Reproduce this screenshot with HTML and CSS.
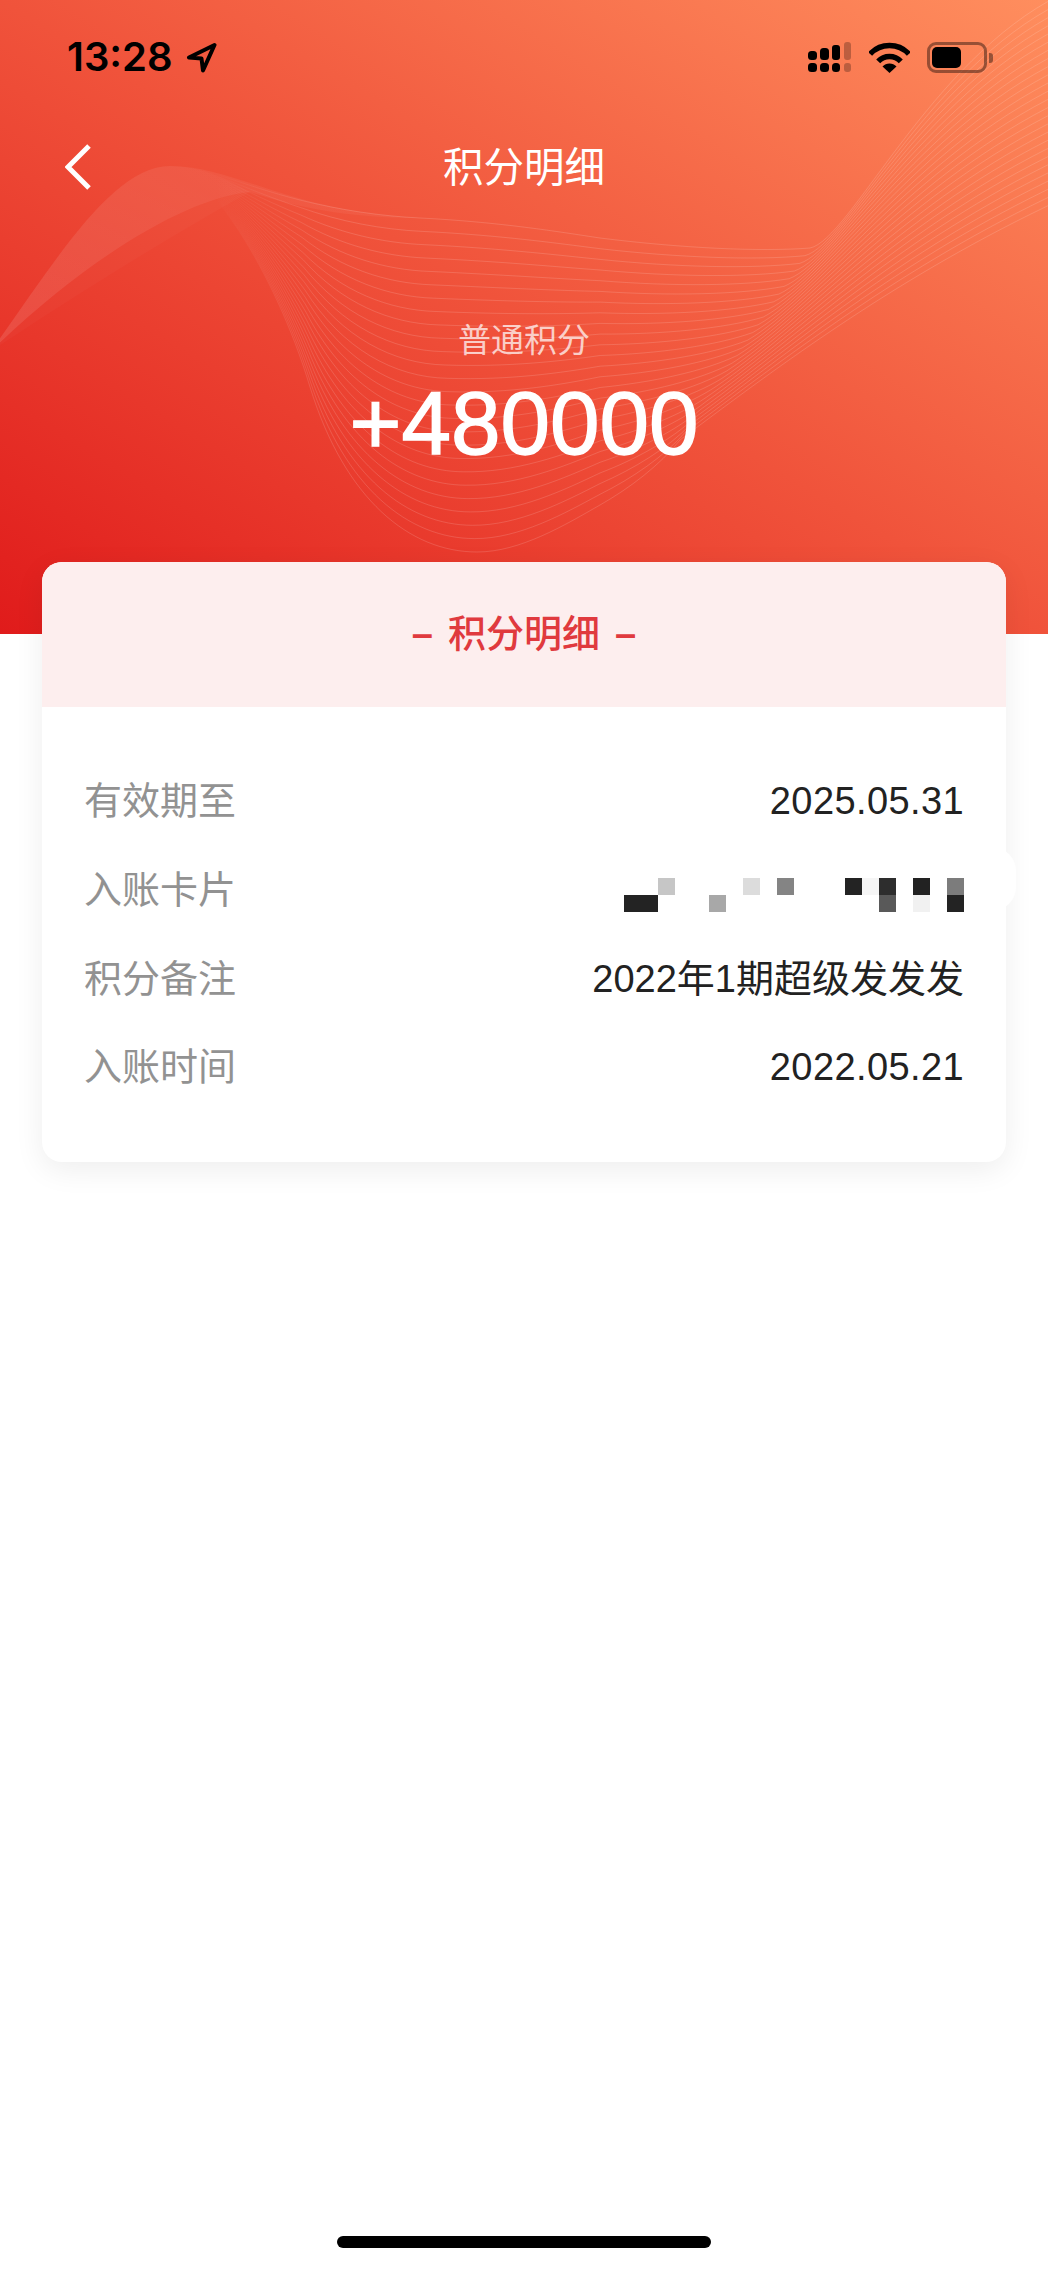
FILE: index.html
```html
<!DOCTYPE html>
<html lang="zh-CN">

<head>
    <meta charset="UTF-8">
    <meta name="viewport" content="width=device-width, initial-scale=1.0">
    <title>积分明细</title>
    <link rel="stylesheet" href="styles.css">
</head>

<body>
    <header class="top">
        <svg class="waves" viewBox="0 0 1048 634" aria-hidden="true">
            <defs>
                <linearGradient id="glow" x1="0" y1="1" x2="1" y2="0">
                    <stop offset="0" stop-color="#fff" stop-opacity=".1"></stop>
                    <stop offset="1" stop-color="#fff" stop-opacity=".03"></stop>
                </linearGradient>
                <linearGradient id="fade" gradientUnits="userSpaceOnUse" x1="215" y1="0" x2="330" y2="0">
                    <stop offset="0" stop-color="#fff" stop-opacity="0"></stop>
                    <stop offset="1" stop-color="#fff" stop-opacity=".14"></stop>
                </linearGradient>
            </defs>
            <path fill="url(#glow)" d="M-10 352C50 270 110 166 170 166C235 166 290 212 420 218C340 218 290 205 250 192C190 197 90 255 -10 352Z"></path>
            <path class="wave-soft" d="M-10 352C50 270 110 166 170 166C200 166 225 178 250 192C190 225 90 285 -10 352Z"></path>
            <g class="wave-lines"></g>
        </svg>

        <div class="status">
            <div class="status-left">
                <span class="time">13:28</span>
                <svg class="arrow" width="31" height="31" viewBox="0 0 31 31">
                    <path d="M28.5 3L3 15.5L15.5 16.5L17 28.5Z"></path>
                </svg>
            </div>
            <div class="status-right">
                <svg class="signal" width="43" height="30" viewBox="0 0 43 30">
                    <rect x="0" y="9" width="9" height="9" rx="3.5"></rect>
                    <rect x="12" y="6" width="9" height="12" rx="3.5"></rect>
                    <rect x="24" y="3" width="8" height="15" rx="3"></rect>
                    <rect class="off" x="36" y="0" width="7" height="18" rx="3"></rect>
                    <rect x="0" y="21" width="9" height="9" rx="3.5"></rect>
                    <rect x="12" y="21" width="9" height="9" rx="3.5"></rect>
                    <rect x="24" y="21" width="8" height="9" rx="3.5"></rect>
                    <rect class="off" x="36" y="21" width="7" height="9" rx="3"></rect>
                </svg>
                <svg class="wifi" width="41" height="31" viewBox="0 0 41 31">
                    <path class="wifi-arc" d="M1.1 12A26.5 26.5 0 0 1 39.9 12"></path>
                    <path class="wifi-arc" d="M9.2 19.4A15.5 15.5 0 0 1 31.8 19.4"></path>
                    <path d="M20.5 31L13.5 24.5A9.5 9.5 0 0 1 27.5 24.5Z"></path>
                </svg>
                <div class="battery"><div class="battery-level"></div></div>
            </div>
        </div>

        <nav class="nav">
            <svg class="back" width="27" height="48" viewBox="0 0 27 48">
                <path d="M24 3L3 24L24 45"></path>
            </svg>
            <h1>积分明细</h1>
        </nav>

        <div class="summary">
            <p class="summary-label">普通积分</p>
            <p class="summary-amount">+480000</p>
        </div>
    </header>

    <main class="card">
        <h2 class="card-title"><span class="dash">–</span><span>积分明细</span><span class="dash">–</span></h2>
        <div class="rows">
            <div class="row">
                <span class="row-label">有效期至</span>
                <span class="row-value row-date">2025.05.31</span>
            </div>
            <div class="row">
                <span class="row-label">入账卡片</span>
                <svg class="mosaic" width="340" height="34" viewBox="0 0 340 34">
                    <rect x="34" y="0" width="17" height="17" fill="#c6c6c6"></rect>
                    <rect x="119" y="0" width="17" height="17" fill="#dcdcdc"></rect>
                    <rect x="153" y="0" width="17" height="17" fill="#848484"></rect>
                    <rect x="221" y="0" width="17" height="17" fill="#232323"></rect>
                    <rect x="238" y="0" width="17" height="17" fill="#f5f5f5"></rect>
                    <rect x="255" y="0" width="17" height="17" fill="#2d2d2d"></rect>
                    <rect x="289" y="0" width="17" height="17" fill="#222222"></rect>
                    <rect x="323" y="0" width="17" height="17" fill="#7c7c7c"></rect>
                    <rect x="0" y="17" width="34" height="17" fill="#232323"></rect>
                    <rect x="85" y="17" width="17" height="17" fill="#a8a8a8"></rect>
                    <rect x="255" y="17" width="17" height="17" fill="#595959"></rect>
                    <rect x="289" y="17" width="17" height="17" fill="#f1f1f1"></rect>
                    <rect x="323" y="17" width="17" height="17" fill="#232323"></rect>
                </svg>
            </div>
            <div class="row">
                <span class="row-label">积分备注</span>
                <span class="row-value">2022年1期超级发发发</span>
            </div>
            <div class="row">
                <span class="row-label">入账时间</span>
                <span class="row-value row-date">2022.05.21</span>
            </div>
        </div>
    </main>

    <div class="home-bar"></div>

    <script src="script.js"></script>
</body>

</html>
```

FILE: styles.css
```css
* {
    margin: 0;
    padding: 0;
    box-sizing: border-box;
}

body {
    position: relative;
    height: 2269px;
    overflow: hidden;
    background-color: #fff;
    font-family: "Liberation Sans", "Noto Sans CJK SC", sans-serif;
}

.top {
    position: relative;
    height: 634px;
    overflow: hidden;
    color: #fff;
    background: linear-gradient(to top right, #e01b1b 0%, #f0533b 50%, #ff8e5e 100%);
}

.waves {
    position: absolute;
    top: 0;
    left: 0;
    width: 1048px;
    height: 634px;
}

.wave-soft {
    fill: #fff;
    fill-opacity: .025;
}

.wave-lines path {
    fill: none;
    stroke: url(#fade);
    stroke-width: 1;
}

.status,
.nav,
.summary {
    position: relative;
}

.status {
    display: flex;
    justify-content: space-between;
    align-items: center;
    height: 114px;
    padding: 0 55px 0 67px;
    color: #000;
}

.status-left,
.status-right {
    display: flex;
    align-items: center;
}

.time {
    font-family: Inter, sans-serif;
    font-size: 40px;
    font-weight: 600;
    line-height: 1;
}

.arrow {
    margin-left: 13px;
}

.arrow path {
    fill: none;
    stroke: #000;
    stroke-width: 4;
    stroke-linejoin: round;
}

.signal rect {
    fill: #000;
}

.signal .off {
    fill-opacity: .25;
}

.wifi {
    margin-left: 18px;
}

.wifi-arc {
    fill: none;
    stroke: #000;
    stroke-width: 5.5;
}

.battery {
    position: relative;
    width: 60px;
    height: 31px;
    margin: 0 6px 0 17px;
    padding: 2px;
    border: 3px solid rgba(0, 0, 0, .4);
    border-radius: 9px;
}

.battery::after {
    content: "";
    position: absolute;
    top: 8px;
    right: -9px;
    width: 4px;
    height: 10px;
    border-radius: 0 3px 3px 0;
    background-color: rgba(0, 0, 0, .4);
}

.battery-level {
    width: 29px;
    height: 100%;
    border-radius: 5px;
    background-color: #000;
}

.nav {
    display: flex;
    justify-content: center;
    align-items: center;
    height: 108px;
}

.back {
    position: absolute;
    left: 65px;
    top: 29px;
}

.back path {
    fill: none;
    stroke: #fff;
    stroke-width: 5;
}

.nav h1 {
    font-size: 40.5px;
    font-weight: 400;
    line-height: 56px;
}

.summary {
    margin-top: 97px;
    text-align: center;
}

.summary-label {
    font-size: 33px;
    line-height: 44px;
    color: rgba(255, 255, 255, .72);
}

.summary-amount {
    margin-top: 10px;
    font-size: 89px;
    line-height: 100px;
    -webkit-text-stroke: 1.4px #fff;
}

.card {
    position: relative;
    margin: -72px 42px 0;
    height: 600px;
    border-radius: 20px;
    background-color: #fff;
    box-shadow: 0 8px 30px rgba(0, 0, 0, .07);
}

/* white smudge over the shadow, next to the masked card number */
.card::after {
    content: "";
    position: absolute;
    top: 285px;
    right: -10px;
    width: 24px;
    height: 64px;
    border-radius: 0 28px 28px 0;
    background-color: #fff;
}

.card-title {
    display: flex;
    justify-content: center;
    align-items: center;
    gap: 15px;
    height: 145px;
    padding-bottom: 1px;
    border-radius: 20px 20px 0 0;
    font-size: 38px;
    font-weight: 500;
    line-height: 52px;
    color: #e03a3e;
    background-color: #fdeeee;
}

.dash {
    font-weight: 700;
}

.rows {
    padding: 50px 42px 0;
}

.row {
    display: flex;
    justify-content: space-between;
    align-items: center;
    height: 88.7px;
    font-size: 38px;
    line-height: 52px;
}

.row-label {
    color: #929292;
}

.row-value {
    color: #222;
}

.row-date {
    letter-spacing: .4px;
}

.mosaic {
    margin-top: 9px;
}

.home-bar {
    position: absolute;
    left: 337px;
    bottom: 21px;
    width: 374px;
    height: 12px;
    border-radius: 6px;
    background-color: #000;
}
```

FILE: script.js
```js
// the wave is a blend of two curves, both with the same number of segments
const topCurve = [
    [170, 166],
    [205, 166], [240, 185], [300, 200],
    [340, 210], [380, 216], [420, 218],
    [500, 222], [560, 232], [600, 238],
    [680, 248], [760, 252], [810, 248],
    [850, 240], [930, 60], [1060, -5],
];

const bottomCurve = [
    [170, 166],
    [205, 166], [275, 270], [310, 387],
    [345, 500], [410, 552], [477, 552],
    [520, 552], [565, 525], [600, 505],
    [630, 488], [660, 465], [680, 440],
    [780, 365], [900, 275], [1060, 200],
];

const lineCount = 26;
const group = document.querySelector('.wave-lines');

for (let i = 0; i < lineCount; i++) {
    const t = i / (lineCount - 1);
    const points = topCurve.map((point, index) => {
        const x = point[0] + (bottomCurve[index][0] - point[0]) * t;
        const y = point[1] + (bottomCurve[index][1] - point[1]) * t;
        return x.toFixed(1) + ' ' + y.toFixed(1);
    });

    let d = 'M' + points[0];
    for (let p = 1; p < points.length; p += 3) {
        d += 'C' + points[p] + ' ' + points[p + 1] + ' ' + points[p + 2];
    }

    const line = document.createElementNS('http://www.w3.org/2000/svg', 'path');
    line.setAttribute('d', d);
    group.appendChild(line);
}
```
